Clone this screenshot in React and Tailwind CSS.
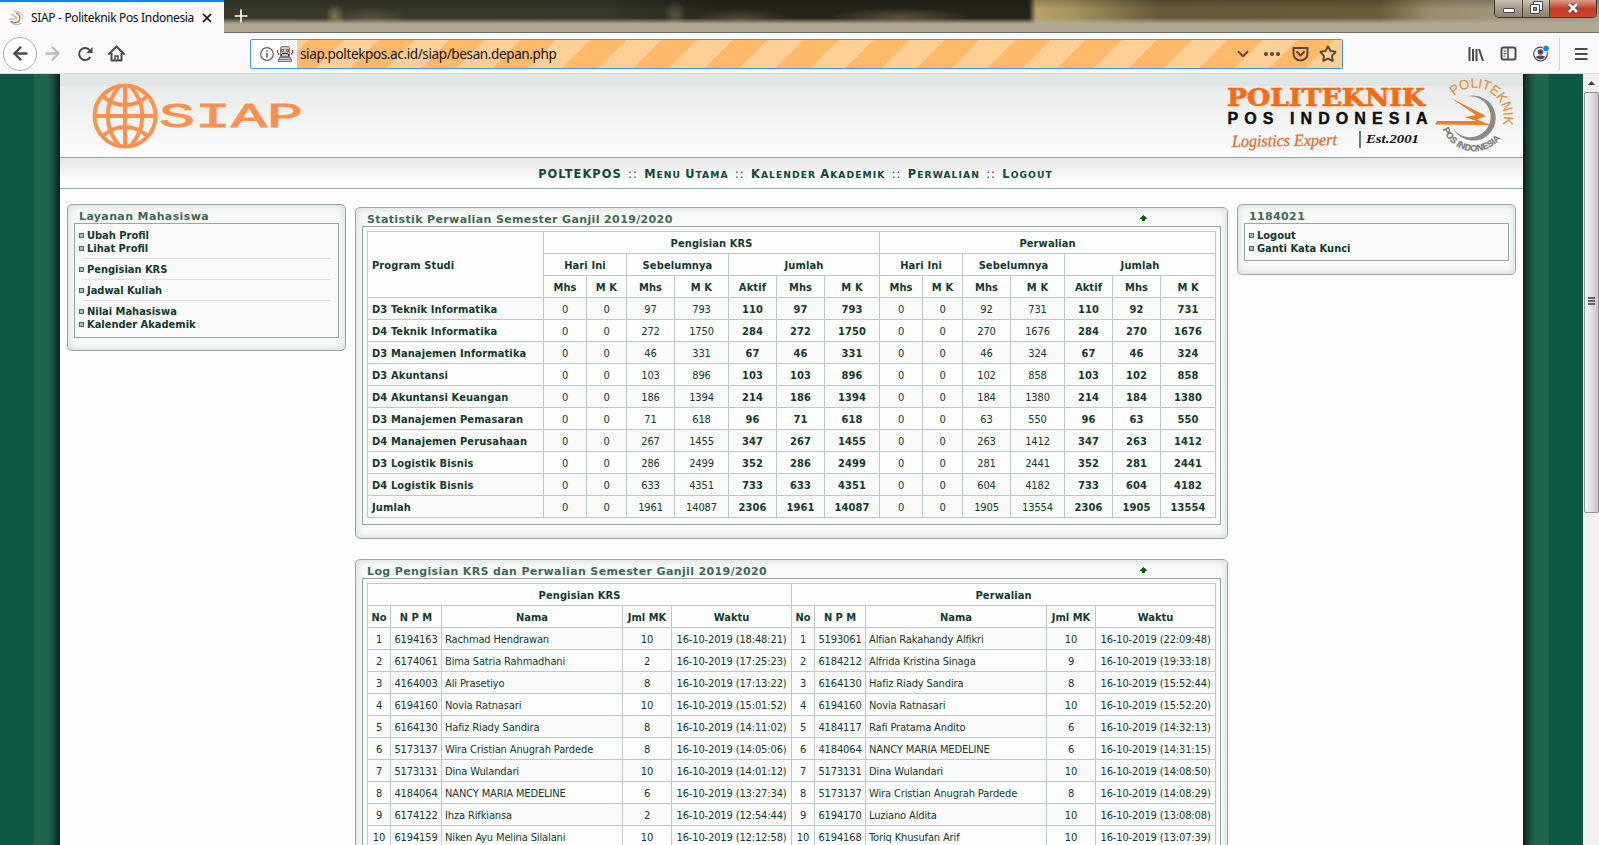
import React from "react";
import { ArrowLeft, ArrowRight, Plus, X, ChevronDown, Star } from "lucide-react";

const UI = "font-['Noto_Sans','Open_Sans',sans-serif]";
const TAHOMA = "font-['DejaVu_Sans_Condensed','DejaVu_Sans',sans-serif] [font-stretch:condensed]";
const VERDANA = "font-['DejaVu_Sans',sans-serif] [font-stretch:normal]";

const STATS = [
  ["D3 Teknik Informatika", 0, 0, 97, 793, 110, 97, 793, 0, 0, 92, 731, 110, 92, 731],
  ["D4 Teknik Informatika", 0, 0, 272, 1750, 284, 272, 1750, 0, 0, 270, 1676, 284, 270, 1676],
  ["D3 Manajemen Informatika", 0, 0, 46, 331, 67, 46, 331, 0, 0, 46, 324, 67, 46, 324],
  ["D3 Akuntansi", 0, 0, 103, 896, 103, 103, 896, 0, 0, 102, 858, 103, 102, 858],
  ["D4 Akuntansi Keuangan", 0, 0, 186, 1394, 214, 186, 1394, 0, 0, 184, 1380, 214, 184, 1380],
  ["D3 Manajemen Pemasaran", 0, 0, 71, 618, 96, 71, 618, 0, 0, 63, 550, 96, 63, 550],
  ["D4 Manajemen Perusahaan", 0, 0, 267, 1455, 347, 267, 1455, 0, 0, 263, 1412, 347, 263, 1412],
  ["D3 Logistik Bisnis", 0, 0, 286, 2499, 352, 286, 2499, 0, 0, 281, 2441, 352, 281, 2441],
  ["D4 Logistik Bisnis", 0, 0, 633, 4351, 733, 633, 4351, 0, 0, 604, 4182, 733, 604, 4182],
  ["Jumlah", 0, 0, 1961, 14087, 2306, 1961, 14087, 0, 0, 1905, 13554, 2306, 1905, 13554],
];

const LOG = [
  [["6194163", "Rachmad Hendrawan", 10, "18:48:21"], ["5193061", "Alfian Rakahandy Alfikri", 10, "22:09:48"]],
  [["6174061", "Bima Satria Rahmadhani", 2, "17:25:23"], ["6184212", "Alfrida Kristina Sinaga", 9, "19:33:18"]],
  [["4164003", "Ali Prasetiyo", 8, "17:13:22"], ["6164130", "Hafiz Riady Sandira", 8, "15:52:44"]],
  [["6194160", "Novia Ratnasari", 10, "15:01:52"], ["6194160", "Novia Ratnasari", 10, "15:52:20"]],
  [["6164130", "Hafiz Riady Sandira", 8, "14:11:02"], ["4184117", "Rafi Pratama Andito", 6, "14:32:13"]],
  [["5173137", "Wira Cristian Anugrah Pardede", 8, "14:05:06"], ["4184064", "NANCY MARIA MEDELINE", 6, "14:31:15"]],
  [["5173131", "Dina Wulandari", 10, "14:01:12"], ["5173131", "Dina Wulandari", 10, "14:08:50"]],
  [["4184064", "NANCY MARIA MEDELINE", 6, "13:27:34"], ["5173137", "Wira Cristian Anugrah Pardede", 8, "14:08:29"]],
  [["6174122", "Ihza Rifkiansa", 2, "12:54:44"], ["6194170", "Luziano Aldita", 10, "13:08:08"]],
  [["6194159", "Niken Ayu Melina Silalani", 10, "12:12:58"], ["6194168", "Toriq Khusufan Arif", 10, "13:07:39"]],
];

const STAT_COLS = [176, 43, 40, 48, 54, 48, 48, 55, 43, 40, 48, 54, 48, 48, 55];
const LOG_COLS = [23, 51, 181, 49, 120, 23, 51, 181, 49, 120];

const cell = "h-[22px] border-r border-b border-[#b9cbc4] p-0 pt-px leading-[13px] text-center align-middle whitespace-nowrap overflow-hidden";
const bold = "font-bold tracking-[0.12px]";
const plain = "tracking-[-0.13px]";
const tableCls = "table-fixed border-separate border-spacing-0 w-[849px] border-t border-l border-[#b9cbc4] bg-[#fdfdfd] text-[#123a2e] text-[11px]";

function Cols({ widths }) {
  return (
    <colgroup>
      {widths.map((w, i) => <col key={i} style={{ width: w }} />)}
    </colgroup>
  );
}

function Panel({ title, children, className, box, up }) {
  return (
    <section className={"rounded-[5px] border border-[#94aaa1] bg-[#f9f9f9] px-[6px] shadow-[inset_0_0_8px_#cdd6d2] " + className}>
      <div className={"flex h-[18px] items-end pl-[5px] " + VERDANA}>
        <h2 className="flex-1 whitespace-nowrap text-[11px] leading-[13px] font-bold tracking-[0.37px] text-[#3b6b54]">{title}</h2>
        {up && (
          <svg className="mr-[74px] mb-[5px] h-[6px] w-[7px]" viewBox="0 0 7 6" fill="#065a10" shapeRendering="crispEdges">
            <path d="M3 0h1v1h1v1h1v1h1v1H5v2H2V4H0V3h1V2h1V1h1z" />
          </svg>
        )}
      </div>
      <div className={"border border-[#94aaa1] bg-[#f9f9f9] " + box}>{children}</div>
    </section>
  );
}

function Item({ children }) {
  return (
    <li className="flex h-[13px] items-center gap-[3px]">
      <span className="h-[5px] w-[5px] border border-[#3f7160] bg-[#a9bfb7]" />
      <span className="text-[11px] leading-[13px] font-bold text-[#0f3a2d]">{children}</span>
    </li>
  );
}

function Rule() {
  return <li className="mt-[3px] mr-[5px] mb-[4px] ml-[3px] h-px bg-[#dfe2e1]" />;
}

function StatTable() {
  return (
    <table className={tableCls}>
      <Cols widths={STAT_COLS} />
      <tbody>
        <tr>
          <td rowSpan={3} className={cell + " pl-1 text-left! " + bold}>Program Studi</td>
          <td colSpan={7} className={cell + " " + bold}>Pengisian KRS</td>
          <td colSpan={7} className={cell + " " + bold}>Perwalian</td>
        </tr>
        <tr>
          {[0, 1].map((k) => (
            <React.Fragment key={k}>
              <td colSpan={2} className={cell + " " + bold}>Hari Ini</td>
              <td colSpan={2} className={cell + " " + bold}>Sebelumnya</td>
              <td colSpan={3} className={cell + " " + bold}>Jumlah</td>
            </React.Fragment>
          ))}
        </tr>
        <tr>
          {["Mhs", "M K", "Mhs", "M K", "Aktif", "Mhs", "M K", "Mhs", "M K", "Mhs", "M K", "Aktif", "Mhs", "M K"].map((t, i) => (
            <td key={i} className={cell + " " + bold}>{t}</td>
          ))}
        </tr>
        {STATS.map((row, r) => (
          <tr key={r} className={r % 2 === 0 || r === 9 ? "bg-[#f9f9f9]" : "bg-[#fdfdfd]"}>
            {row.map((v, i) => {
              const strong = i === 0 || (i - 1) % 7 >= 4;
              return (
                <td key={i} className={cell + (i === 0 ? " pl-1 text-left! " : " ") + (strong ? bold : plain)}>{v}</td>
              );
            })}
          </tr>
        ))}
      </tbody>
    </table>
  );
}

function LogTable() {
  return (
    <table className={tableCls}>
      <Cols widths={LOG_COLS} />
      <tbody>
        <tr>
          <td colSpan={5} className={cell + " " + bold}>Pengisian KRS</td>
          <td colSpan={5} className={cell + " " + bold}>Perwalian</td>
        </tr>
        <tr>
          {["No", "N P M", "Nama", "Jml MK", "Waktu", "No", "N P M", "Nama", "Jml MK", "Waktu"].map((t, i) => (
            <td key={i} className={cell + " font-bold"}>{t}</td>
          ))}
        </tr>
        {LOG.map((pair, r) => (
          <tr key={r} className={plain + (r % 2 === 0 ? " bg-[#f9f9f9]" : " bg-[#fdfdfd]")}>
            {pair.map((p, k) => (
              <React.Fragment key={k}>
                <td className={cell}>{r + 1}</td>
                <td className={cell}>{p[0]}</td>
                <td className={cell + " pl-[3px] text-left!"}>{p[1]}</td>
                <td className={cell}>{p[2]}</td>
                <td className={cell}>16-10-2019 ({p[3]})</td>
              </React.Fragment>
            ))}
          </tr>
        ))}
      </tbody>
    </table>
  );
}

function SiapLogo() {
  return (
    <svg className="h-[66px] w-[214px]" viewBox="0 0 214 66">
      <g fill="none" stroke="#ff914d" strokeWidth="4">
        <circle cx="33" cy="33" r="30.500" />
        <path d="M33 2v62M2 33h62" />
        <path d="M27 4C12 20 12 46 27 62M39 4c15 16 15 42 0 58" />
        <path d="M10.500 13c13 12 32 12 45 0M10.500 53c13-12 32-12 45 0" />
      </g>
      <text x="67" y="44" textLength="144" lengthAdjust="spacingAndGlyphs" fill="#ff914d" stroke="#ff914d" strokeWidth="0.900" className="font-['Liberation_Mono',monospace] text-[35px]">SIAP</text>
    </svg>
  );
}

function PosLogo() {
  return (
    <svg className="h-[78px] w-[290px]" viewBox="0 0 290 78">
      <text x="2" y="27.500" textLength="198" lengthAdjust="spacingAndGlyphs" fill="#ff6a0d" stroke="#ff6a0d" strokeWidth="0.700" className="font-['DejaVu_Serif',serif] text-[24px] font-bold">POLITEKNIK</text>
      <text x="2.500" y="46" textLength="200" lengthAdjust="spacing" fill="#0b0b0b" stroke="#0b0b0b" strokeWidth="0.400" className="font-['Liberation_Sans',sans-serif] text-[16px] font-bold">POS INDONESIA</text>
      <text x="7" y="69" transform="rotate(-1 8 69)" textLength="105" lengthAdjust="spacingAndGlyphs" fill="#e8692a" stroke="#e8692a" strokeWidth="0.300" className="font-['Liberation_Serif',serif] text-[17px] italic">Logistics Expert</text>
      <path d="M135 53v17" stroke="#42586b" strokeWidth="1.600" />
      <text x="141" y="65" textLength="53" lengthAdjust="spacingAndGlyphs" fill="#111" className="font-['Liberation_Serif',serif] text-[13px] font-bold italic">Est.2001</text>
      <path d="M242 18.500A22.500 22.500 0 1 1 228 50A20.500 20.500 0 1 0 242 18.500Z" fill="#8c8987" />
      <path d="M226 20L261 38L252 41.500L265.500 47L210 46.500L212 43L251 43L240 39L251 37Z" fill="#ec7f24" />
      <path id="arc-top" d="M229 18A29.500 29.500 0 0 1 275 54" fill="none" />
      <path id="arc-bottom" d="M218 51A33 33 0 0 0 277 58" fill="none" />
      <text fill="#e8903f" stroke="#e8903f" strokeWidth="0.200" className="font-['Liberation_Sans',sans-serif] text-[13.5px]">
        <textPath href="#arc-top" textLength="76" lengthAdjust="spacingAndGlyphs">POLITEKNIK</textPath>
      </text>
      <text fill="#7f7d7c" stroke="#7f7d7c" strokeWidth="0.300" className="font-['Liberation_Sans',sans-serif] text-[9px] font-bold">
        <textPath href="#arc-bottom" textLength="71" lengthAdjust="spacingAndGlyphs">POS INDONESIA</textPath>
      </text>
    </svg>
  );
}

function TitleBar() {
  return (
    <div className="flex h-[33px] shrink-0 bg-[linear-gradient(180deg,transparent_0,transparent_18px,#b3aa94_24px,#b0a791_32px,#716c5e_32px,#716c5e_33px),radial-gradient(ellipse_10px_12px_at_335px_16px,#7d7350,transparent),radial-gradient(ellipse_40px_10px_at_370px_18px,#56513c,transparent),radial-gradient(ellipse_12px_14px_at_675px_15px,#555541,transparent),radial-gradient(ellipse_50px_9px_at_740px_18px,#4d4532,transparent),radial-gradient(ellipse_70px_9px_at_900px_17px,#5a4f38,transparent),linear-gradient(180deg,#0003_0,transparent_9px),linear-gradient(90deg,#3a3a2a_0,#36362a_600px,#26241a_720px,#26241a_1029px,#b5a26a_1036px,#a8955f_1070px,#665838_1160px,#6b5d3a_1380px,#9b8d6c_1430px,#a0957a_1500px,#a59a83_1599px)]">
      <div className="flex w-[224px] items-center border-t-2 border-[#0a84ff] bg-[#f9f9f9] pt-[1px]">
        <svg className="ml-2 h-4 w-4" viewBox="0 0 16 16" fill="none">
          <rect width="16" height="16" fill="#fff" />
          <path d="M8 3a5 5 0 1 1-5 8" stroke="#8a8a8a" strokeWidth="1.500" />
          <path d="M6 1.500A7 7 0 0 1 14.500 9" stroke="#f5bd92" strokeWidth="1.500" />
          <path d="M1 9h8M3 4l6 4" stroke="#f29a5c" strokeWidth="1.200" />
          <path d="M2 11a7 7 0 0 0 11 2" stroke="#b5b5b5" strokeWidth="1.200" />
        </svg>
        <span className={"ml-[7px] w-[164px] whitespace-nowrap text-[12px] leading-[16px] tracking-[-0.33px] text-[#0c0c0d] " + UI}>SIAP - Politeknik Pos Indonesia</span>
        <X className="ml-[5px] h-[14px] w-[14px] text-[#111]" strokeWidth={3} />
      </div>
      <Plus className="mt-[6px] ml-[7px] h-5 w-5 text-white" strokeWidth={2} />
      <div className="ml-auto mr-[2px] flex h-[18px] overflow-hidden rounded-b-[5px] border border-t-0 border-[#3b362c]">
        <div className="flex w-[28px] items-end justify-center border-r border-[#4a4538] bg-gradient-to-b from-[#c9c3b6] via-[#a49b88] to-[#8c836f] pb-[4px]">
          <span className="h-[5px] w-[12px] rounded-[1px] border border-[#45475a] bg-white" />
        </div>
        <div className="flex w-[27px] items-center justify-center border-r border-[#4a4538] bg-gradient-to-b from-[#c9c3b6] via-[#a49b88] to-[#8c836f] pb-[2px]">
          <svg className="h-[13px] w-[13px]" viewBox="0 0 13 13" fill="#fff" stroke="#45475a">
            <path d="M3.500.500h9v9h-9z" />
            <path d="M.500 3.500h9v9h-9z" />
            <path d="M3.500 6.500h3v3h-3z" fill="#9b927f" />
          </svg>
        </div>
        <div className="flex w-[46px] items-center justify-center bg-gradient-to-b from-[#dc9d8e] via-[#c23c22] to-[#c8472c] pb-[2px]">
          <svg className="h-[12px] w-[12px]" viewBox="0 0 12 12">
            <path d="M2 2l8 8M10 2l-8 8" stroke="#45475a" strokeWidth="4.500" />
            <path d="M2 2l8 8M10 2l-8 8" stroke="#fff" strokeWidth="2.600" />
          </svg>
        </div>
      </div>
    </div>
  );
}

function Robot() {
  return (
    <svg className="h-4 w-4" viewBox="0 0 16 16" shapeRendering="crispEdges">
      <path d="M4 0h8v1h1v10H3V1h1z" fill="#7b7b7b" />
      <path d="M4 1h8v9H4z" fill="#c8c8c8" />
      <path d="M4 3h3v3H4zM9 3h3v3H9z" fill="#d9482e" />
      <path d="M5 4h1v1H5zM10 4h1v1h-1z" fill="#ffd83a" />
      <path d="M5 7h6v1h1v2h-1V8H5v2H4V8h1z" fill="#2c2c2c" />
      <path d="M0 4h1v3h1v2H1V7H0zM15 4h1v3h-1v2h-1V7h1z" fill="#d3122e" />
      <path d="M2 11h12v2h1v3H1v-3h1z" fill="#777" />
      <path d="M3 12h10v1H3zM2 14h12v1H2z" fill="#d0d0d0" />
    </svg>
  );
}

function Toolbar() {
  return (
    <div className="flex h-[41px] shrink-0 items-center border-b border-[#dcdcdc] bg-[#f9f9fa] pt-px text-[#4a4a4f]">
      <div className="ml-[3px] flex h-[34px] w-[34px] items-center justify-center rounded-full border border-[#aeaeae] bg-white">
        <ArrowLeft className="h-[21px] w-[21px]" strokeWidth={2.6} />
      </div>
      <ArrowRight className="ml-[5px] h-[21px] w-[21px] text-[#bcbcbe]" strokeWidth={2.6} />
      <svg className="ml-[14px] h-4 w-4" viewBox="0 0 16 16" fill="none" stroke="#4a4a4f" strokeWidth="2">
        <path d="M13.300 11A6 6 0 1 1 13 4.500" />
        <path d="M15.500 1v6h-6z" fill="#4a4a4f" stroke="none" />
      </svg>
      <svg className="ml-[15px] h-[17px] w-[17px]" viewBox="0 0 17 17" fill="none" stroke="#4a4a4f" strokeWidth="2" strokeLinejoin="round">
        <path d="M1 9l7.500-7.500L16 9" strokeLinecap="round" />
        <path d="M3.500 8v7.500h10V8" />
        <path d="M7 15v-4h3v4" strokeWidth="1.500" />
      </svg>
      <div className="ml-[125px] flex h-[30px] w-[1093px] items-center rounded-[2px] border border-[#3c96f5] bg-white">
        <svg className="ml-[9px] h-[14px] w-[14px]" viewBox="0 0 14 14" fill="none" stroke="#636367">
          <circle cx="7" cy="7" r="6.300" strokeWidth="1.300" />
          <path d="M7 6v4.500M7 3.300v1.500" strokeWidth="1.600" />
        </svg>
        <span className="ml-[3px]"><Robot /></span>
        <div className="ml-[4px] flex h-[28px] flex-1 items-center bg-[repeating-linear-gradient(135deg,#ffcf95_0,#ffcf95_7.8px,#ffb968_7.8px,#ffb968_32.8px,#ffcf95_32.8px,#ffcf95_50px)] text-[#5b4631]">
          <span className={"ml-[3px] flex-1 whitespace-nowrap text-[13.5px] leading-[20px] tracking-[-0.37px] text-[#15110c] " + UI}>siap.poltekpos.ac.id/siap/besan.depan.php</span>
          <ChevronDown className="h-[18px] w-[18px]" strokeWidth={2.4} />
          <svg className="ml-[11px] h-4 w-[18px]" viewBox="0 0 18 16" fill="currentColor">
            <circle cx="3" cy="8" r="2" /><circle cx="9" cy="8" r="2" /><circle cx="15" cy="8" r="2" />
          </svg>
          <svg className="ml-[11px] h-[16px] w-[17px]" viewBox="0 0 17 16" fill="none" stroke="currentColor" strokeWidth="2" strokeLinejoin="round">
            <path d="M1.500 2h14v5.500a7 7 0 0 1-14 0z" />
            <path d="M5 6l3.500 3.500L12 6" strokeLinecap="round" />
          </svg>
          <Star className="mr-[5px] ml-[10px] h-[18px] w-[18px]" strokeWidth={2.6} />
        </div>
      </div>
      <svg className="ml-[125px] h-4 w-4" viewBox="0 0 16 16" stroke="#4a4a4f" strokeWidth="2">
        <path d="M1.500 1v14M5 3v12M8.500 3v12M11 3l4 12" fill="none" />
      </svg>
      <svg className="ml-[16px] h-[15px] w-[17px]" viewBox="0 0 17 15" fill="none" stroke="#4a4a4f">
        <rect x="1.500" y="1.500" width="14" height="12" rx="2" strokeWidth="2" />
        <path d="M8 2v11" strokeWidth="1.500" /><path d="M3.500 5h3M3.500 7.500h3M3.500 10h2" />
      </svg>
      <svg className="ml-[16px] h-[17px] w-[17px]" viewBox="0 0 17 17" fill="none">
        <circle cx="7.500" cy="9" r="6.800" stroke="#4a4a4f" strokeWidth="1.200" />
        <circle cx="7.500" cy="7" r="2.800" fill="#4a4a4f" />
        <path d="M3 12c1-2 8-2 9 0-2 3-7 3-9 0z" fill="#4a4a4f" />
        <circle cx="13" cy="3.500" r="3.300" fill="#0a84ff" stroke="#f9f9fa" strokeWidth="0.800" />
      </svg>
      <span className="ml-[9px] h-[34px] w-px bg-[#d7d7db]" />
      <svg className="ml-[15px] h-[14px] w-[13px]" viewBox="0 0 13 14" stroke="#4a4a4f" strokeWidth="2">
        <path d="M0 2h12.500M0 7h12.500M0 12h12.500" />
      </svg>
    </div>
  );
}

function Scrollbar() {
  return (
    <div className="flex w-[16px] flex-col items-center bg-[#f0f0f1]">
      <div className="flex h-[18px] items-center">
        <svg className="h-[4px] w-[7px]" viewBox="0 0 7 4"><path d="M3.500 0L7 4H0z" fill="#404040" /></svg>
      </div>
      <div className="flex h-[421px] w-[15px] items-center justify-center rounded-[2px] border border-[#929297] bg-gradient-to-r from-[#f5f5f6] via-[#e0e0e4] to-[#c3c3ca]">
        <div className="flex flex-col gap-px pb-[4px]">
          <span className="h-[2px] w-[7px] bg-[#5f6064]" />
          <span className="h-[2px] w-[7px] bg-[#5f6064]" />
          <span className="h-[2px] w-[7px] bg-[#5f6064]" />
        </div>
      </div>
    </div>
  );
}

function Caps({ children }) {
  return <span className="inline-block text-[9.2px] uppercase first-letter:text-[11.4px]">{children}</span>;
}

function NavBar() {
  return (
    <nav className={"flex h-[31px] shrink-0 items-center justify-center border-b border-[#94b0a2] bg-[linear-gradient(180deg,#e6e6e6,#fdfdfd_24px)] pt-[2px] pl-[8px] text-[11.4px] leading-[16px] text-[#0f4a38] " + VERDANA}>
      <div className="flex items-baseline gap-[6.3px] font-bold tracking-[1.06px]">
        <span>POLTEKPOS</span>
        <span className="font-normal">::</span>
        <span className="flex items-baseline gap-[4px]"><Caps>Menu</Caps><Caps>Utama</Caps></span>
        <span className="font-normal">::</span>
        <span className="flex items-baseline gap-[4px]"><Caps>Kalender</Caps><Caps>Akademik</Caps></span>
        <span className="font-normal">::</span>
        <Caps>Perwalian</Caps>
        <span className="font-normal">::</span>
        <Caps>Logout</Caps>
      </div>
    </nav>
  );
}

export default function App() {
  return (
    <div className="flex h-[845px] w-[1599px] flex-col overflow-hidden bg-white">
      <TitleBar />
      <Toolbar />
      <div className="flex h-[771px] overflow-hidden">
        <div className="w-[60px] shrink-0 bg-[linear-gradient(90deg,#0d5842_0,#0d5842_34px,#1d644f_34px,#1d644f_48px,#174e3e_53px,#0a2019_60px)]" />
        <main className="flex w-[1463px] shrink-0 flex-col bg-[#fdfdfd]">
          <header className="flex h-[84px] shrink-0 items-start justify-between border-b border-[#94aaa1] bg-[linear-gradient(180deg,#e3e8e6_0,#dee4e2_12px,#e8ebea_12px,#fbfbfb_80px)] pr-[8px] pl-[32px]">
            <div className="pt-[9px]"><SiapLogo /></div>
            <div className="pt-[4px]"><PosLogo /></div>
          </header>
          <NavBar />
          <div className={"flex items-start px-[7px] pt-[15px] " + TAHOMA}>
            <Panel title="Layanan Mahasiswa" className="h-[147px] w-[279px]" box="h-[115px] pt-[5px] pl-[4px] pr-[2px]">
              <ul>
                <Item>Ubah Profil</Item>
                <Item>Lihat Profil</Item>
                <Rule />
                <Item>Pengisian KRS</Item>
                <Rule />
                <Item>Jadwal Kuliah</Item>
                <Rule />
                <Item>Nilai Mahasiswa</Item>
                <Item>Kalender Akademik</Item>
              </ul>
            </Panel>
            <div className="mt-[3px] ml-[9px] flex flex-col gap-[20px]">
              <Panel up title="Statistik Perwalian Semester Ganjil 2019/2020" className="h-[332px] w-[873px]" box="h-[299px] p-[4px]">
                <StatTable />
              </Panel>
              <Panel up title="Log Pengisian KRS dan Perwalian Semester Ganjil 2019/2020" className="w-[873px] pb-[14px]" box="p-[4px]">
                <LogTable />
              </Panel>
            </div>
            <Panel title="1184021" className="ml-[9px] h-[71px] w-[279px]" box="h-[38px] pt-[5px] pl-[4px]">
              <ul>
                <Item>Logout</Item>
                <Item>Ganti Kata Kunci</Item>
              </ul>
            </Panel>
          </div>
        </main>
        <div className="w-[60px] shrink-0 bg-[linear-gradient(90deg,#0a2019_0,#174e3e_7px,#1d644f_12px,#1d644f_26px,#0d5842_26px)]" />
        <Scrollbar />
      </div>
    </div>
  );
}
